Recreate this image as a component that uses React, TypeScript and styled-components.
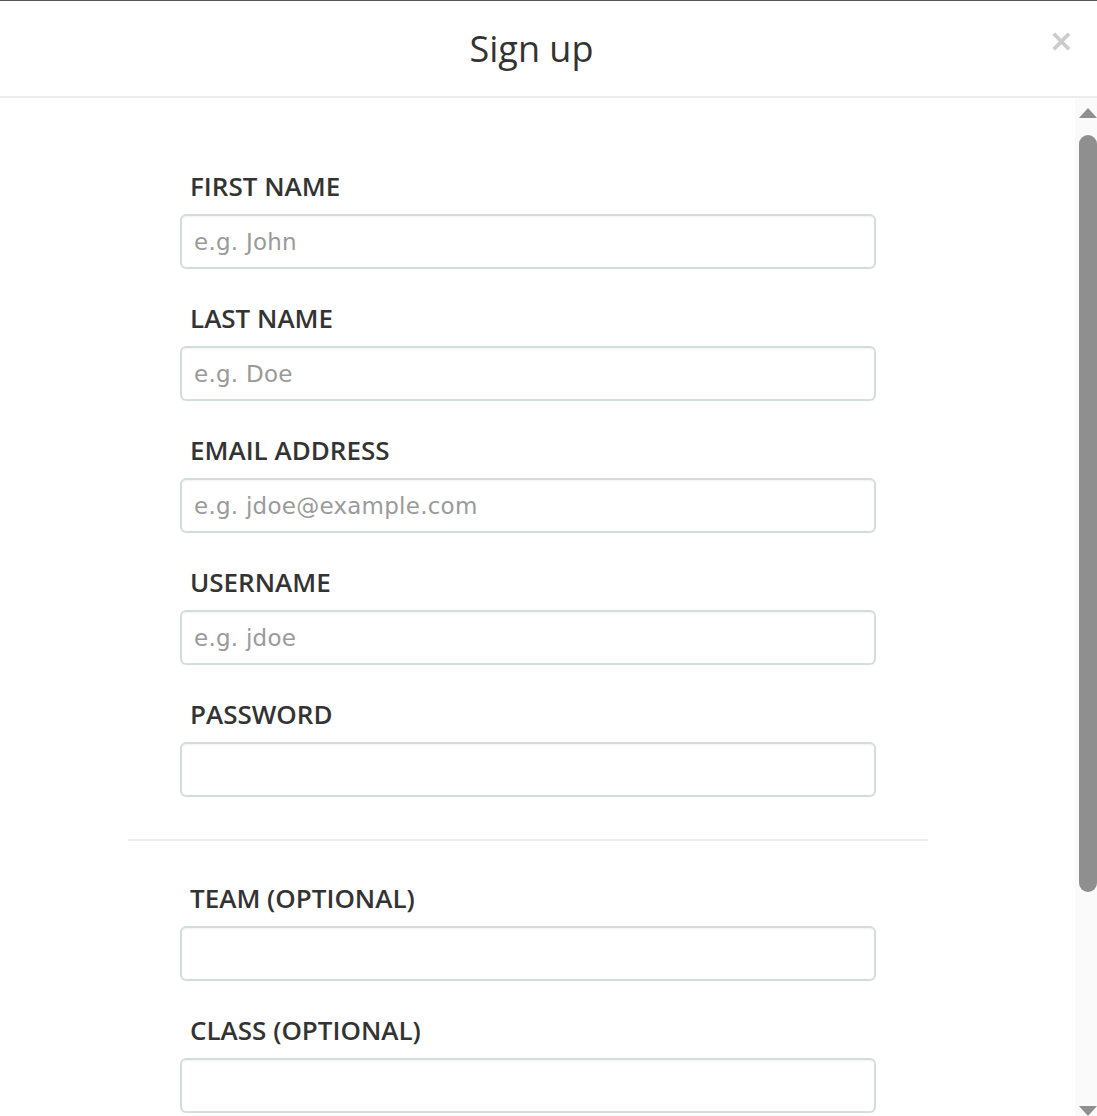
import React from "react";
import styled, { createGlobalStyle } from "styled-components";

const Global = createGlobalStyle`
  html, body { margin: 0; padding: 0; background: #fff; }
  body { font-family: "Open Sans", "Liberation Sans", sans-serif; color: #333; }
  * { box-sizing: border-box; }
`;

const Modal = styled.div`
  width: 1097px;
  height: 1116px;
  display: flex;
  flex-direction: column;
  border-top: 1px solid #555;
  overflow: hidden;
  background: #fff;
`;

const Header = styled.header`
  position: relative;
  height: 97px;
  flex: none;
  display: flex;
  align-items: center;
  justify-content: center;
  border-bottom: 2px solid #ececec;
  padding-right: 34px;
`;

const Title = styled.h1`
  margin: 0;
  font-family: "Open Sans", sans-serif;
  font-weight: 500;
  font-size: 36px;
  color: #333;
`;

const Close = styled.button`
  position: absolute;
  right: 23px;
  top: 22px;
  border: 0;
  background: none;
  padding: 0;
  font-family: "DejaVu Sans", sans-serif;
  font-weight: 700;
  font-size: 30px;
  line-height: 36px;
  color: #cbcbcb;
  cursor: pointer;
`;

const Body = styled.div`
  flex: 1;
  display: flex;
  min-height: 0;
`;

const Content = styled.div`
  flex: 1;
  padding: 74px 0 0 128px;
`;

const Form = styled.form`
  width: 800px;
  display: flex;
  flex-direction: column;
`;

const Section = styled.div`
  display: flex;
  flex-direction: column;
  gap: 35px;
  padding: 0 52px;
`;

const Field = styled.div`
  display: flex;
  flex-direction: column;
  gap: 14px;
`;

const Label = styled.label`
  font-family: "Open Sans", sans-serif;
  font-size: 26px;
  font-weight: 600;
  line-height: 28px;
  color: #333;
  padding-left: 10px;
  text-transform: uppercase;
`;

const Input = styled.input`
  height: 55px;
  width: 100%;
  border: 2px solid #d4dcdc;
  border-radius: 6px;
  padding: 0 12px;
  font-family: "DejaVu Sans", Verdana, sans-serif;
  font-size: 23px;
  letter-spacing: 0.25px;
  color: #333;
  box-shadow: inset 0 1px 2px rgba(0, 0, 0, 0.05);
  outline: none;
  &::placeholder {
    color: #9a9a9a;
  }
`;

const Divider = styled.hr`
  border: 0;
  border-top: 2px solid #eee;
  margin: 42px 0 43px;
  width: 100%;
`;

const ScrollTrack = styled.div`
  width: 22px;
  flex: none;
  background: #fafafa;
  display: flex;
  flex-direction: column;
  align-items: flex-end;
  padding-top: 10px;
`;

const Arrow = styled.div<{ $down?: boolean }>`
  width: 0;
  height: 0;
  border-left: 9px solid transparent;
  border-right: 9px solid transparent;
  ${(p) => (p.$down ? "border-top: 10px solid #8f8f8f;" : "border-bottom: 10px solid #8f8f8f;")}
`;

const Thumb = styled.div`
  width: 18px;
  height: 757px;
  margin-top: 17px;
  background: #8f8f8f;
  border-radius: 9px;
`;

const Spacer = styled.div`
  flex: 1;
`;

const fields1 = [
  { label: "First name", ph: "e.g. John", type: "text" },
  { label: "Last name", ph: "e.g. Doe", type: "text" },
  { label: "Email address", ph: "e.g. jdoe@example.com", type: "email" },
  { label: "Username", ph: "e.g. jdoe", type: "text" },
  { label: "Password", ph: "", type: "password" },
];

const fields2 = [
  { label: "Team (optional)", ph: "", type: "text" },
  { label: "Class (optional)", ph: "", type: "text" },
];

export default function App() {
  return (
    <>
      <Global />
      <Modal>
        <Header>
          <Title>Sign up</Title>
          <Close aria-label="Close">×</Close>
        </Header>
        <Body>
          <Content>
            <Form>
              <Section>
                {fields1.map((f) => (
                  <Field key={f.label}>
                    <Label>{f.label}</Label>
                    <Input type={f.type} placeholder={f.ph} />
                  </Field>
                ))}
              </Section>
              <Divider />
              <Section>
                {fields2.map((f) => (
                  <Field key={f.label}>
                    <Label>{f.label}</Label>
                    <Input type={f.type} placeholder={f.ph} />
                  </Field>
                ))}
              </Section>
            </Form>
          </Content>
          <ScrollTrack>
            <Arrow />
            <Thumb />
            <Spacer />
            <Arrow $down />
          </ScrollTrack>
        </Body>
      </Modal>
    </>
  );
}
